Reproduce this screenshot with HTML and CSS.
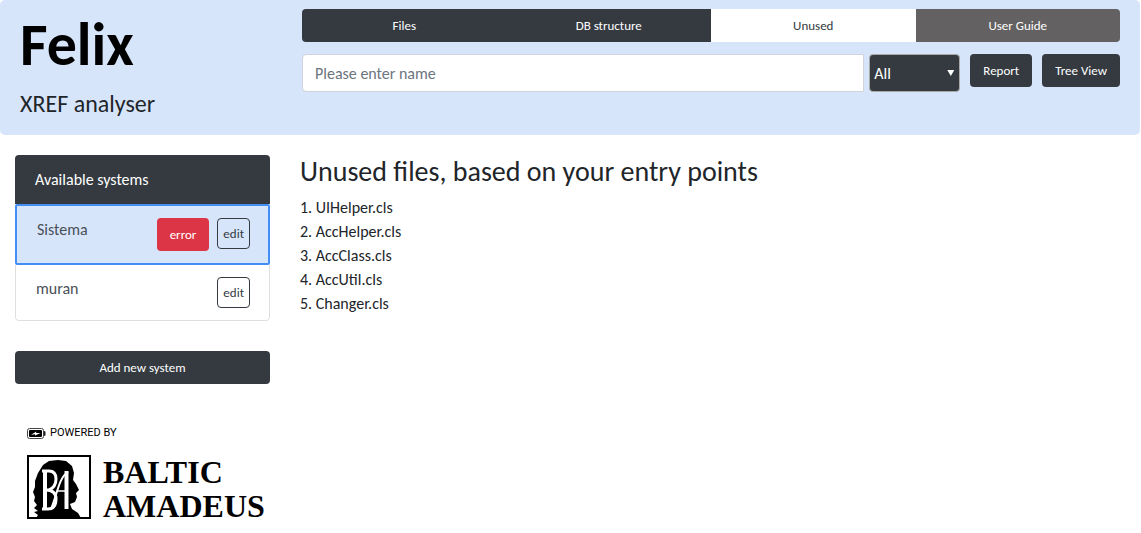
FILE: index.html
```html
<!DOCTYPE html>
<html lang="en">
<head>
<meta charset="utf-8">
<title>Felix</title>
<meta name="viewport" content="width=device-width, initial-scale=1">
<link rel="stylesheet" href="styles.css">
</head>
<body>
<header class="header">
  <div class="brand">
    <h1 class="brand-name">Felix</h1>
    <p class="brand-sub">XREF analyser</p>
  </div>
  <div class="tools">
    <nav class="tabs">
      <button class="tab" type="button">Files</button>
      <button class="tab" type="button">DB structure</button>
      <button class="tab tab-active" type="button">Unused</button>
      <button class="tab tab-guide" type="button">User Guide</button>
    </nav>
    <form class="search">
      <input class="search-input" type="text" placeholder="Please enter name" aria-label="Name">
      <div class="select-wrap">
        <select class="select" aria-label="Type"><option>All</option></select>
        <span class="select-arrow"></span>
      </div>
      <button class="btn btn-report" type="button">Report</button>
      <button class="btn" type="button">Tree View</button>
    </form>
  </div>
</header>
<div class="page">
  <aside class="sidebar">
    <section class="systems">
      <h2 class="systems-title">Available systems</h2>
      <div class="system system-active">
        <span class="system-name">Sistema</span>
        <button class="btn btn-error" type="button">error</button>
        <button class="btn-edit" type="button">edit</button>
      </div>
      <div class="system">
        <span class="system-name">muran</span>
        <button class="btn-edit" type="button">edit</button>
      </div>
    </section>
    <button class="btn btn-add" type="button">Add new system</button>
    <div class="powered">
      <div class="powered-by">
        <svg width="19" height="11" viewBox="0 0 19 11" aria-hidden="true">
          <rect x="0.5" y="0.5" width="16" height="10" rx="2" fill="#fff" stroke="#444"/>
          <rect x="2" y="2" width="13" height="7" rx="1" fill="#000"/>
          <path d="M17 3q1.500 0 1.500 1v3q0 1-1.500 1z" fill="#222"/>
          <path d="M4 6.800L9.500 3.400L9 5h4.500L8 7.600V6.300z" fill="#fff"/>
        </svg>
        <span>POWERED BY</span>
      </div>
      <div class="company">
        <svg width="64" height="64" viewBox="0 0 64 64" aria-hidden="true">
          <rect x="1" y="1" width="62" height="62" fill="#fff" stroke="#000" stroke-width="2"/>
          <path d="M9 63L11 60L7 57L11 56L7 53L10 50L7 46L8 42L6 37L8 32L8 26L11 18L16 10L22 6L31 5L39 6L45 11L47 18L46 25L49 29L52 35L49 38L50 42L48 47L43 49L45 54L51 58L54 63Z" fill="#000"/>
          <g fill="none" stroke="#fff">
            <path d="M15 16h7q7 0 7 8 0 8-7 11h-3q10 0 10 9 0 10-8 10h-6" stroke-width="3"/>
            <path d="M18 16v38" stroke-width="4"/>
            <path d="M24 54C30 40 32 22 41 17" stroke-width="2"/>
            <path d="M30 36h9" stroke-width="1.500"/>
            <path d="M39.500 16v38" stroke-width="4"/>
          </g>
        </svg>
        <div class="company-name"><span>BALTIC</span><span>AMADEUS</span></div>
      </div>
    </div>
  </aside>
  <main class="content">
    <h2 class="content-title">Unused files, based on your entry points</h2>
    <ol class="files">
      <li>UIHelper.cls</li>
      <li>AccHelper.cls</li>
      <li>AccClass.cls</li>
      <li>AccUtil.cls</li>
      <li>Changer.cls</li>
    </ol>
  </main>
</div>
</body>
</html>
```
FILE: styles.css
```css
* {
  box-sizing: border-box;
}

body {
  margin: 0;
  padding-right: 1px;
  background: #fff;
  color: #212529;
  font-family: Carlito, Lato, "Open Sans", sans-serif;
  font-size: 16px;
  line-height: 24px;
}

h1, h2, p, ol {
  margin: 0;
  padding: 0;
}

button, input, select {
  margin: 0;
  font-family: inherit;
}

.header {
  display: grid;
  grid-template-columns: 1fr 3fr;
  padding: 9px 20px 16px;
  border-radius: 5px;
  background: #d7e5fb;
}

.brand-name {
  color: #000;
  font-size: 60px;
  line-height: 72px;
  font-weight: 700;
}

.brand-sub {
  padding-top: 8px;
  font-size: 24px;
  line-height: 30px;
}

.tools {
  display: flex;
  flex-direction: column;
  gap: 12px;
  padding-left: 7px;
}

.tabs {
  display: grid;
  grid-template-columns: repeat(4, 1fr);
  border-radius: 4px;
  overflow: hidden;
}

.tab, .btn {
  height: 33px;
  padding: 0 13px;
  border: 0;
  background: #343a40;
  color: #fff;
  font-size: 13px;
  font-weight: 500;
  white-space: nowrap;
}

.tab-active {
  background: #fff;
  color: #343a40;
}

.tab-guide {
  background: #636161;
}

.btn {
  border-radius: 4px;
}

.search {
  display: flex;
  align-items: flex-start;
  gap: 10px;
}

.search-input {
  flex: 1;
  min-width: 0;
  height: 38px;
  margin-right: -5px;
  padding: 0 12px;
  border: 1px solid #ced4da;
  border-radius: 4px 0 0 4px;
  background: #fff;
  color: #495057;
  font-size: 16px;
}

.search-input::placeholder {
  color: #6c757d;
}

.select-wrap {
  position: relative;
  width: 91px;
}

.select {
  appearance: none;
  width: 100%;
  height: 38px;
  padding: 0 4px;
  border: 1px solid #a9a9a9;
  border-radius: 4px;
  background: #343a40;
  color: #fff;
  font-size: 16px;
}

.select-arrow {
  position: absolute;
  top: 16px;
  right: 6px;
  width: 7px;
  height: 6px;
  background: #fff;
  clip-path: polygon(0 0, 100% 0, 50% 100%);
  pointer-events: none;
}

.page {
  display: grid;
  grid-template-columns: 1fr 3fr;
  padding-top: 20px;
}

.sidebar {
  padding: 0 15px;
}

.systems {
  border-radius: 4px;
  overflow: hidden;
}

.systems-title {
  padding: 13px 20px 12px;
  background: #343a40;
  color: #fff;
  font-size: 16px;
  line-height: 24px;
  font-weight: 500;
}

.system {
  display: flex;
  align-items: flex-start;
  gap: 8px;
  padding: 12px 19px 12px 20px;
  border: 1px solid #dfdfdf;
  border-top: 0;
  border-radius: 0 0 4px 4px;
  color: #495057;
}

.system-active {
  padding-right: 18px;
  border: 2px solid #438ef5;
  border-radius: 2px;
  background: #d7e5fb;
}

.system-name {
  flex: 1;
}

.btn-error {
  background: #dc3545;
}

.btn-edit {
  height: 31px;
  padding: 0 5px;
  border: 1px solid #343a40;
  border-radius: 4px;
  background: transparent;
  color: #343a40;
  font-size: 13px;
}

.btn-add {
  display: block;
  width: 100%;
  margin-top: 30px;
}

.powered {
  padding: 39px 0 0 12px;
  color: #000;
}

.powered-by {
  display: flex;
  align-items: center;
  gap: 4px;
  height: 20px;
  font-family: "Liberation Sans Narrow", Roboto, sans-serif;
  font-size: 11px;
}

.company {
  display: flex;
  gap: 12px;
  padding-top: 12px;
}

.company-name {
  display: flex;
  flex-direction: column;
  font-family: "Liberation Serif", serif;
  font-size: 32px;
  line-height: 34px;
  font-weight: 700;
}

.content {
  padding: 0 15px;
}

.content-title {
  font-size: 28px;
  line-height: 34px;
  font-weight: 400;
}

.files {
  padding-top: 7px;
  list-style-position: inside;
}
```
